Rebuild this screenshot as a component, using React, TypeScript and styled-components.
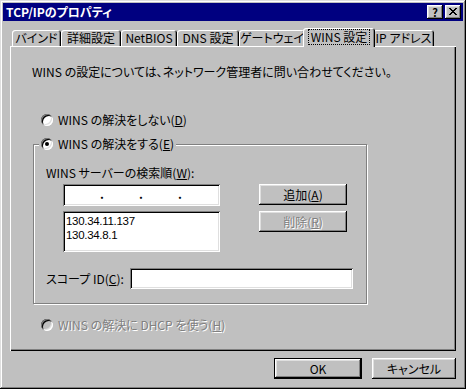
import React from 'react';
import styled, { createGlobalStyle, css } from 'styled-components';

const GlobalStyle = createGlobalStyle`
  html, body {
    margin: 0;
    padding: 0;
    background: #c0c0c0;
  }
  body {
    font-family: "Noto Sans CJK JP", "Noto Sans", sans-serif;
    font-size: 12px;
    font-feature-settings: "palt";
    color: #000;
  }
`;

const raised = css`
  box-shadow: inset -1px -1px #000, inset 1px 1px #fff, inset -2px -2px #808080,
    inset 2px 2px #dfdfdf;
`;

const sunken = css`
  box-shadow: inset 1px 1px #808080, inset -1px -1px #fff, inset 2px 2px #000,
    inset -2px -2px #dfdfdf;
`;

const disabledText = css`
  color: #808080;
  text-shadow: 1px 1px 0 #fff;
`;

const tabs = [
  { label: 'バインド', width: 49 },
  { label: '詳細設定', width: 60 },
  { label: 'NetBIOS', width: 56 },
  { label: 'DNS 設定', width: 62 },
  { label: 'ゲートウェイ', width: 66 },
  { label: 'WINS 設定', width: 68, active: true },
  { label: 'IP アドレス', width: 61 },
];

const App = () => {
  return (
    <>
      <GlobalStyle />
      <Window>
        <TitleBar>
          <span>TCP/IPのプロパティ</span>
          <TitleButtons>
            <TitleButton>?</TitleButton>
            <TitleButton>
              <svg width="8" height="7" viewBox="0 0 8 7" shapeRendering="crispEdges">
                <path
                  fill="#000"
                  d="M0 0h2v1H0zM6 0h2v1H6zM1 1h2v1H1zM5 1h2v1H5zM2 2h4v1H2zM3 3h2v1H3zM2 4h4v1H2zM1 5h2v1H1zM5 5h2v1H5zM0 6h2v1H0zM6 6h2v1H6z"
                />
              </svg>
            </TitleButton>
          </TitleButtons>
        </TitleBar>

        <Body>
          <TabStrip>
            {tabs.map((t) => (
              <Tab key={t.label} $width={t.width} $active={t.active}>
                <TabLabel $focus={t.active}>{t.label}</TabLabel>
              </Tab>
            ))}
          </TabStrip>

          <Panel>
            <Line>WINS の設定については、ネットワーク管理者に問い合わせてください。</Line>

            <RadioRow $top={34}>
              <Radio />
              <span>
                WINS の解決をしない(<u>D</u>)
              </span>
            </RadioRow>

            <Group>
              <Legend>
                <Radio $checked />
                <span>
                  WINS の解決をする(<u>E</u>)
                </span>
              </Legend>
              <GroupBody>
                <Line>
                  WINS サーバーの検索順(<u>W</u>):
                </Line>
                <ServerGrid>
                  <IpField>
                    <span />
                    <IpDot>.</IpDot>
                    <span />
                    <IpDot>.</IpDot>
                    <span />
                    <IpDot>.</IpDot>
                    <span />
                  </IpField>
                  <Button $width={88}>
                    追加(<u>A</u>)
                  </Button>
                  <ListBox>
                    <ListItem>130.34.11.137</ListItem>
                    <ListItem>130.34.8.1</ListItem>
                  </ListBox>
                  <Button $width={88} $disabled>
                    削除(<u>R</u>)
                  </Button>
                </ServerGrid>
                <ScopeRow>
                  <ScopeLabel>
                    スコープ ID(<u>C</u>):
                  </ScopeLabel>
                  <Edit $width={223} />
                </ScopeRow>
              </GroupBody>
            </Group>

            <RadioRow $top={14} $disabled>
              <Radio $disabled />
              <span>
                WINS の解決に DHCP を使う(<u>H</u>)
              </span>
            </RadioRow>
          </Panel>

          <ButtonRow>
            <Button $width={88} $default>
              OK
            </Button>
            <Button $width={84}>キャンセル</Button>
          </ButtonRow>
        </Body>
      </Window>
    </>
  );
};

export default App;

const Window = styled.div`
  box-sizing: border-box;
  width: 466px;
  height: 389px;
  padding: 3px;
  background: #c0c0c0;
  box-shadow: inset -1px -1px #000, inset 1px 1px #dfdfdf, inset -2px -2px #808080,
    inset 2px 2px #fff;
  display: flex;
  flex-direction: column;
`;

const TitleBar = styled.div`
  height: 18px;
  flex-shrink: 0;
  background: #000080;
  color: #fff;
  font-weight: 700;
  line-height: 18px;
  padding: 0 2px 0 3px;
  display: flex;
  align-items: center;
  justify-content: space-between;
`;

const TitleButtons = styled.div`
  display: flex;
  gap: 2px;
`;

const TitleButton = styled.div`
  box-sizing: border-box;
  width: 16px;
  height: 14px;
  background: #c0c0c0;
  ${raised}
  color: #000;
  font-weight: 700;
  font-size: 11px;
  line-height: 12px;
  display: flex;
  align-items: center;
  justify-content: center;
  padding-bottom: 1px;
`;

const Body = styled.div`
  flex: 1;
  display: flex;
  flex-direction: column;
  padding: 7px;
`;

const TabStrip = styled.div`
  height: 18px;
  flex-shrink: 0;
  display: flex;
  align-items: flex-start;
  padding-left: 2px;
  position: relative;
  z-index: 1;
`;

const Tab = styled.div<{ $width: number; $active?: boolean }>`
  box-sizing: border-box;
  position: relative;
  z-index: ${(p) => (p.$active ? 2 : 1)};
  width: ${(p) => p.$width + (p.$active ? 4 : 0)}px;
  height: ${(p) => (p.$active ? 19 : 16)}px;
  margin: ${(p) => (p.$active ? '0 -2px 0' : '2px 0 0')};
  padding-top: ${(p) => (p.$active ? 2 : 1)}px;
  background: #c0c0c0;
  border-radius: 3px 3px 0 0;
  box-shadow: inset 1px 1px #fff, inset -1px 0 #000, inset -2px 0 #808080;
  display: flex;
  justify-content: center;
  align-items: flex-start;
  white-space: nowrap;
`;

const TabLabel = styled.span<{ $focus?: boolean }>`
  line-height: 14px;
  padding: 0 2px;
  outline: ${(p) => (p.$focus ? '1px dotted #000' : 'none')};
`;

const Panel = styled.div`
  flex: 1;
  background: #c0c0c0;
  box-shadow: inset 1px 1px #fff, inset -1px -1px #000, inset -2px -2px #808080;
  padding: 19px 0 0 22px;
  display: flex;
  flex-direction: column;
  align-items: flex-start;
`;

const Line = styled.div`
  line-height: 14px;
  white-space: nowrap;
`;

const RadioRow = styled.div<{ $top: number; $disabled?: boolean }>`
  margin: ${(p) => p.$top}px 0 0 9px;
  height: 14px;
  line-height: 14px;
  display: flex;
  align-items: center;
  gap: 5px;
  white-space: nowrap;
  ${(p) => p.$disabled && disabledText}
`;

const Radio = styled.span<{ $checked?: boolean; $disabled?: boolean }>`
  box-sizing: border-box;
  width: 12px;
  height: 12px;
  flex-shrink: 0;
  border-radius: 50%;
  background: ${(p) => (p.$disabled ? '#c0c0c0' : '#fff')};
  box-shadow: inset 1px 1px #808080, inset -1px -1px #fff, inset 2px 2px #000,
    inset -2px -2px #dfdfdf;
  display: flex;
  align-items: center;
  justify-content: center;

  &::after {
    content: '';
    display: ${(p) => (p.$checked ? 'block' : 'none')};
    width: 4px;
    height: 4px;
    border-radius: 50%;
    background: #000;
  }
`;

const Group = styled.fieldset`
  box-sizing: border-box;
  width: 334px;
  margin: 10px 0 0 1px;
  padding: 0;
  min-inline-size: 0;
  border: 1px solid #808080;
  box-shadow: 1px 1px 0 #fff, inset 1px 1px 0 #fff;
`;

const Legend = styled.legend`
  margin-left: 5px;
  padding: 0 2px;
  background: #c0c0c0;
  height: 14px;
  line-height: 14px;
  display: flex;
  align-items: center;
  gap: 5px;
  white-space: nowrap;
`;

const GroupBody = styled.div`
  padding: 15px 0 14px 12px;
  display: flex;
  flex-direction: column;
`;

const ServerGrid = styled.div`
  margin: 4px 0 0 17px;
  display: grid;
  grid-template-columns: 157px 88px;
  column-gap: 39px;
  row-gap: 5px;
  align-items: start;
`;

const field = css`
  box-sizing: border-box;
  background: #fff;
  ${sunken}
`;

const IpField = styled.div`
  ${field}
  height: 22px;
  padding-left: 2px;
  display: grid;
  grid-template-columns: 35px 3px 36px 3px 36px 3px 1fr;
`;

const IpDot = styled.span`
  font-weight: 700;
  line-height: 20px;
  text-align: center;
`;

const ListBox = styled.div`
  ${field}
  height: 41px;
  padding: 3px 3px 2px;
  display: flex;
  flex-direction: column;
`;

const ListItem = styled.div`
  font-family: "Liberation Sans", Arial, sans-serif;
  font-size: 11.5px;
  letter-spacing: -0.3px;
  line-height: 14px;
  height: 14px;
`;

const ScopeRow = styled.div`
  margin-top: 16px;
  display: flex;
  align-items: center;
`;

const ScopeLabel = styled.span`
  width: 84px;
  line-height: 14px;
  white-space: nowrap;
`;

const Edit = styled.div<{ $width: number }>`
  ${field}
  width: ${(p) => p.$width}px;
  height: 21px;
`;

const Button = styled.button<{ $width: number; $default?: boolean; $disabled?: boolean }>`
  box-sizing: border-box;
  width: ${(p) => p.$width}px;
  height: 21px;
  padding: 0;
  border: ${(p) => (p.$default ? '1px solid #000' : 'none')};
  background: #c0c0c0;
  ${raised}
  font-family: inherit;
  font-size: 12px;
  font-feature-settings: "palt";
  line-height: 14px;
  color: #000;
  ${(p) => p.$disabled && disabledText}
`;

const ButtonRow = styled.div`
  margin-top: 7px;
  display: flex;
  justify-content: flex-end;
  gap: 10px;
`;
